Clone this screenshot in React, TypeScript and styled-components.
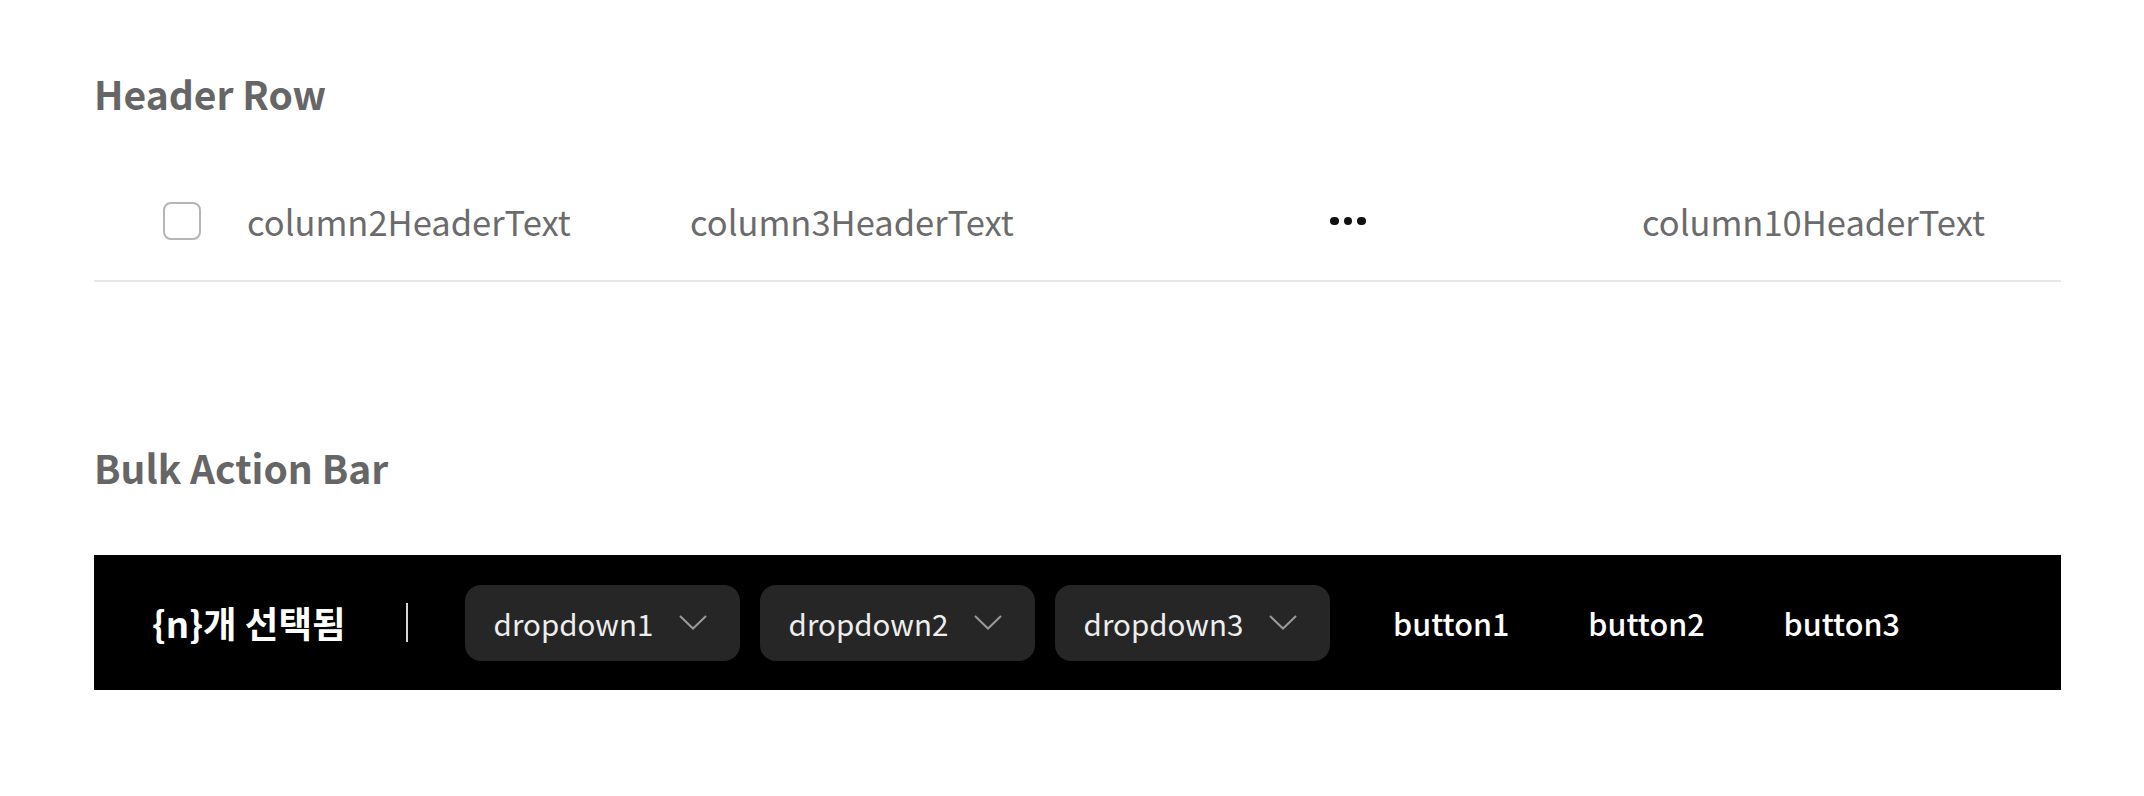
import React from "react";
import styled, { createGlobalStyle } from "styled-components";

const GlobalStyle = createGlobalStyle`
  html, body {
    margin: 0;
    padding: 0;
    background: #ffffff;
    font-family: "Noto Sans CJK KR", "Noto Sans", sans-serif;
  }
`;

const Page = styled.div`
  width: 1967px;
  padding: 65px 0 0 94px;
  display: flex;
  flex-direction: column;
`;

const Section = styled.section<{ $gap: number; $top?: number }>`
  display: flex;
  flex-direction: column;
  gap: ${(p) => p.$gap}px;
  margin-top: ${(p) => p.$top ?? 0}px;
`;

const Title = styled.h2`
  margin: 0;
  font-size: 39px;
  line-height: 56px;
  font-weight: 700;
  color: #666666;
`;

const HeaderRow = styled.div`
  display: flex;
  align-items: center;
  height: 118px;
  padding-left: 69px;
  border-bottom: 2px solid #e8e8ec;
`;

const CheckCell = styled.div`
  width: 84px;
  flex: none;
  display: flex;
  align-items: center;
`;

const Checkbox = styled.span`
  width: 38px;
  height: 38px;
  box-sizing: border-box;
  border: 2.5px solid #b4b4b9;
  border-radius: 8px;
  background: #fff;
`;

const HeaderCell = styled.div<{ $width?: number }>`
  flex: ${(p) => (p.$width ? "none" : "1")};
  width: ${(p) => (p.$width ? `${p.$width}px` : "auto")};
  font-size: 34.5px;
  color: #6b6b6b;
  white-space: nowrap;
`;

const Dots = styled.div<{ $width: number }>`
  width: ${(p) => p.$width}px;
  flex: none;
  display: flex;
  gap: 5px;
  align-items: center;
`;

const Dot = styled.span`
  width: 8.5px;
  height: 8.5px;
  border-radius: 50%;
  background: #111;
`;

const Bar = styled.div`
  height: 135px;
  background: #000;
  display: flex;
  align-items: center;
  padding-left: 58px;
`;

const Count = styled.span`
  font-size: 36.5px;
  font-weight: 700;
  color: #ffffff;
  white-space: nowrap;
`;

const Divider = styled.span`
  width: 2px;
  height: 39px;
  background: #d8d8d8;
  margin: 0 57px 0 60px;
`;

const DropdownGroup = styled.div`
  display: flex;
  gap: 20px;
`;

const Dropdown = styled.button`
  width: 275px;
  height: 76px;
  box-sizing: border-box;
  border: none;
  border-radius: 16px;
  background: #262626;
  color: #eeeeee;
  font-family: inherit;
  font-size: 29.5px;
  display: flex;
  align-items: center;
  justify-content: space-between;
  padding: 0 33px 0 29px;
`;

const Chevron = styled.svg`
  width: 28px;
  height: 15px;
  flex: none;
`;

const ButtonGroup = styled.div`
  display: flex;
  margin-left: 24px;
`;

const TextButton = styled.button`
  border: none;
  background: transparent;
  color: #ffffff;
  font-family: inherit;
  font-size: 30.5px;
  font-weight: 500;
  padding: 0 39.5px;
`;

export default function App() {
  return (
    <>
      <GlobalStyle />
      <Page>
        <Section $gap={41}>
          <Title>Header Row</Title>
          <HeaderRow>
            <CheckCell>
              <Checkbox />
            </CheckCell>
            <HeaderCell $width={443}>column2HeaderText</HeaderCell>
            <HeaderCell $width={640}>column3HeaderText</HeaderCell>
            <Dots $width={312}>
              <Dot />
              <Dot />
              <Dot />
            </Dots>
            <HeaderCell>column10HeaderText</HeaderCell>
          </HeaderRow>
        </Section>
        <Section $gap={60} $top={157}>
          <Title>Bulk Action Bar</Title>
          <Bar>
            <Count>{"{n}개 선택됨"}</Count>
            <Divider />
            <DropdownGroup>
              {["dropdown1", "dropdown2", "dropdown3"].map((d) => (
                <Dropdown key={d}>
                  <span>{d}</span>
                  <Chevron viewBox="0 0 28 15" fill="none">
                    <path d="M1 1L14 13.5L27 1" stroke="#9a9a9a" strokeWidth="2" />
                  </Chevron>
                </Dropdown>
              ))}
            </DropdownGroup>
            <ButtonGroup>
              <TextButton>button1</TextButton>
              <TextButton>button2</TextButton>
              <TextButton>button3</TextButton>
            </ButtonGroup>
          </Bar>
        </Section>
      </Page>
    </>
  );
}
